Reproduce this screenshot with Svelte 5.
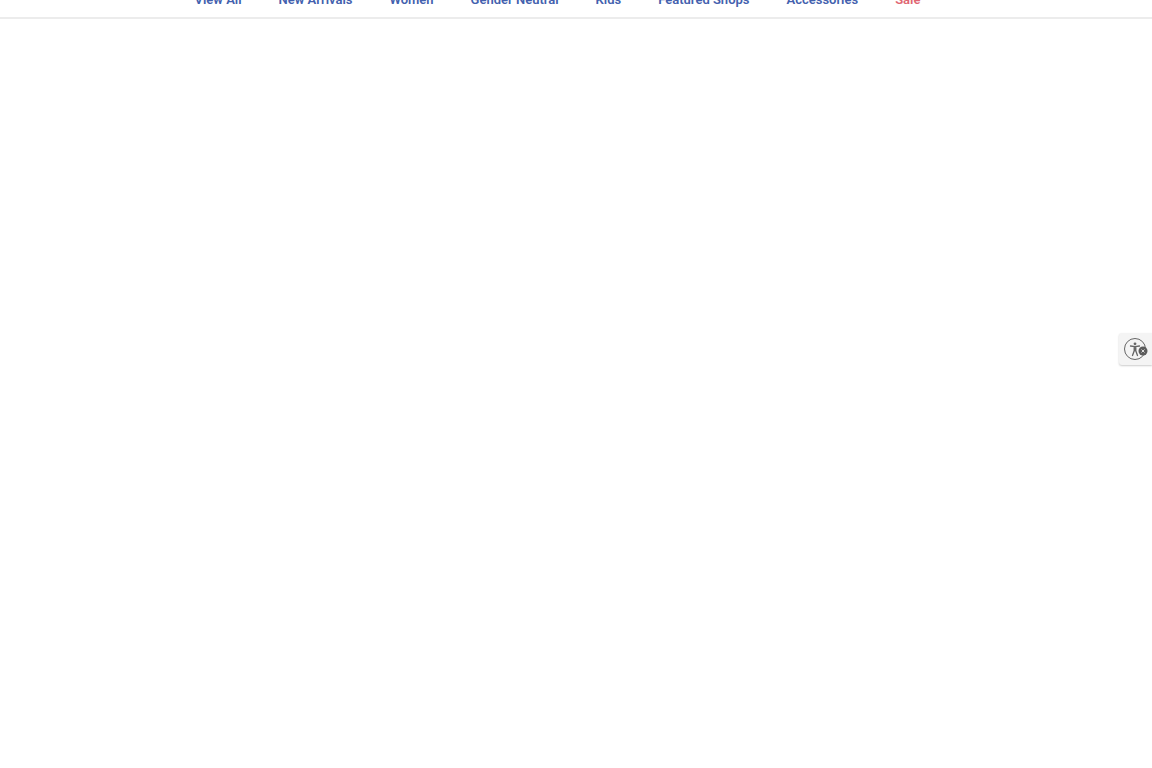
<script>
  const links = ['View All', 'New Arrivals', 'Women', 'Gender Neutral', 'Kids', 'Featured Shops', 'Accessories', 'Sale'];
</script>

<header>
  <nav aria-label="Shop">
    {#each links as link}
      <a href="#shop" class:sale={link === 'Sale'}>{link}</a>
    {/each}
  </nav>
</header>
<main></main>
<button class="access" aria-label="Accessibility">
  <svg viewBox="0 0 26 24" width="26" height="24">
    <circle cx="12" cy="12" r="10.5" fill="none" stroke="#666" stroke-width="1" />
    <circle cx="12" cy="6.8" r="1.4" fill="#666" />
    <path d="M7.500 9L12 9.600l4.500-.6M12 9.600v4M11.200 9.800v4l-1.700 4.700M12.800 9.800v4l1.700 4.700" fill="none" stroke="#666" stroke-width="1.300" stroke-linecap="round" />
    <circle cx="20" cy="14" r="4.500" fill="#5c5c5c" />
    <path d="M18.500 12.500l3 3m0-3l-3 3" stroke="#ddd" stroke-width="1" />
  </svg>
</button>

<style>
  :global(body) { margin: 0; background: #fff; }
  header { height: 17px; border-bottom: 2px solid #ececec; overflow: hidden; }
  nav { display: flex; justify-content: center; gap: 37px; margin-top: -10px; padding-right: 37px; }
  a { font: 600 13px/20px Roboto, sans-serif; color: #4361ae; text-decoration: none; white-space: nowrap; }
  .sale { color: #e06672; }
  .access { position: fixed; right: 0; top: 333px; width: 33px; height: 32px; padding: 0; display: flex; align-items: center; justify-content: center; border: 0; border-radius: 3px 0 0 3px; background: #f4f4f4; box-shadow: 0 1px 2px #ccc; }
</style>
